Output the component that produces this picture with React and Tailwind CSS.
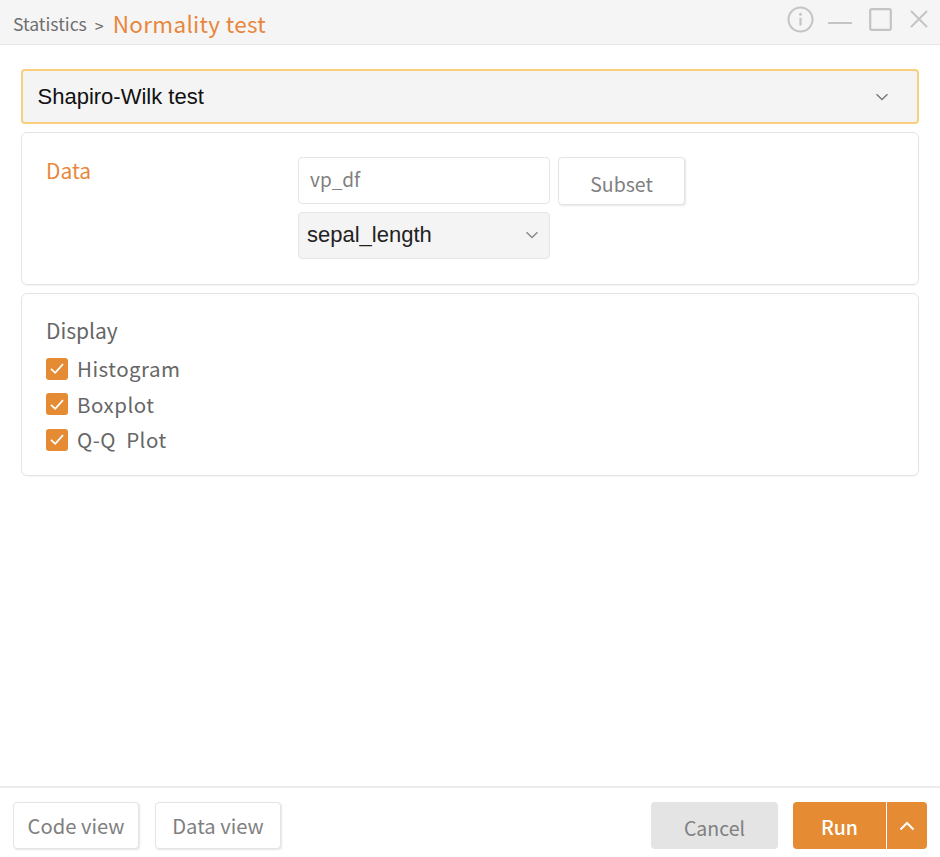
import React from "react";

function Chevron({ color = "#777" }) {
  return (
    <svg width="14" height="8" viewBox="0 0 14 8" fill="none">
      <path d="M1.5 1.2 L7 6.6 L12.5 1.2" stroke={color} strokeWidth="1.4" />
    </svg>
  );
}

function Check({ label }) {
  return (
    <div className="flex h-[35.5px] items-center">
      <span className="flex h-[22px] w-[22px] items-center justify-center rounded-[3px] bg-[#e48b33]">
        <svg width="16" height="13" viewBox="0 0 16 13" fill="none">
          <path d="M2 6.8 L6.2 10.8 L14 2.2" stroke="#fff" strokeWidth="1.8" />
        </svg>
      </span>
      <span className="ml-[9px] text-[20.5px] tracking-[0.5px] text-[#666] [word-spacing:5px]">{label}</span>
    </div>
  );
}

function GhostButton({ children, className = "" }) {
  return (
    <button className={"rounded-[4px] border border-[#e4e4e4] bg-white text-[#808080] shadow-[1px_1px_2px_rgba(0,0,0,0.1)] " + className}>
      {children}
    </button>
  );
}

export default function App() {
  return (
    <div className="flex h-[857px] w-[940px] flex-col overflow-hidden bg-white font-['Noto_Sans_CJK_KR','Noto_Sans',sans-serif]">
      <header className="flex h-[45px] shrink-0 items-center border-b border-[#e6e6e6] bg-[#f5f5f5] pl-[13px] pr-[12px]">
        <span className="mt-[5px] text-[17.6px] text-[#6e6e6e]">Statistics</span>
        <span className="ml-[8px] mt-[5px] text-[16px] text-[#6e6e6e]">&gt;</span>
        <span className="ml-[9px] mt-[3px] text-[22.5px] tracking-[0.3px] text-[#e8873c]">Normality test</span>
        <div className="ml-auto flex items-center">
          <svg width="27" height="27" viewBox="0 0 27 27" fill="none" className="mb-[5px]">
            <circle cx="13.5" cy="13.5" r="12" stroke="#c4c4c4" strokeWidth="2" />
            <circle cx="13.5" cy="8.2" r="1.5" fill="#c4c4c4" />
            <path d="M13.5 11.8 V19.5" stroke="#c4c4c4" strokeWidth="2.2" />
          </svg>
          <svg width="24" height="27" viewBox="0 0 24 27" fill="none" className="mb-[2px] ml-[14px]">
            <path d="M0 15 H24" stroke="#c4c4c4" strokeWidth="2" />
          </svg>
          <svg width="23" height="23" viewBox="0 0 23 23" fill="none" className="mb-[6px] ml-[17px]">
            <rect x="1.2" y="1.2" width="20.6" height="20.6" rx="1.5" stroke="#c4c4c4" strokeWidth="2.2" />
          </svg>
          <svg width="18" height="18" viewBox="0 0 18 18" fill="none" className="mb-[6px] ml-[18px]">
            <path d="M1 1 L17 17 M17 1 L1 17" stroke="#c4c4c4" strokeWidth="2" />
          </svg>
        </div>
      </header>

      <main className="flex flex-1 flex-col px-[21px] pt-[24px]">
        <div className="flex h-[55px] items-center justify-between rounded-[4px] border-2 border-[#f8cf7f] bg-[#f4f4f4] pl-[14.5px] pr-[28px] font-['Liberation_Sans',sans-serif] text-[22px] text-[#111]">
          <span>Shapiro-Wilk test</span>
          <Chevron />
        </div>

        <section className="mt-[8px] flex h-[153px] rounded-[6px] border border-[#e4e4e4] shadow-[0_1px_1px_rgba(0,0,0,0.04)]">
          <div className="w-[276px] shrink-0 pl-[24px] pt-[22px] text-[21px] leading-[30px] text-[#e8873c]">Data</div>
          <div className="pt-[24px]">
            <div className="flex gap-[8px]">
              <div className="flex h-[47px] w-[252px] items-center rounded-[4px] border border-[#e4e4e4] bg-white pb-[2px] pl-[11px] text-[19px] text-[#808080]">
                vp_df
              </div>
              <GhostButton className="h-[48px] w-[127px] pt-[6px] text-[19.5px]">Subset</GhostButton>
            </div>
            <div className="mt-[7px] flex h-[47px] w-[252px] items-center justify-between rounded-[4px] border border-[#e6e6e6] bg-[#f4f4f4] pb-[2px] pl-[8px] pr-[10px] font-['Liberation_Sans',sans-serif] text-[22px] text-[#222]">
              <span>sepal_length</span>
              <Chevron color="#888" />
            </div>
          </div>
        </section>

        <section className="mt-[8px] h-[183px] rounded-[6px] border border-[#e4e4e4] pl-[24px] pt-[21px] shadow-[0_1px_1px_rgba(0,0,0,0.04)]">
          <div className="mb-[6px] text-[21px] leading-[30px] text-[#666]">Display</div>
          <Check label="Histogram" />
          <Check label="Boxplot" />
          <Check label="Q-Q Plot" />
        </section>
      </main>

      <footer className="flex h-[71px] shrink-0 items-start border-t-2 border-[#ececec] pl-[13px] pr-[13px] pt-[14px]">
        <GhostButton className="h-[47px] w-[126px] pt-[2px] text-[20.2px]">Code view</GhostButton>
        <GhostButton className="ml-[16px] h-[47px] w-[126px] pt-[2px] text-[20.2px]">Data view</GhostButton>
        <button className="ml-auto h-[47px] w-[127px] rounded-[4px] bg-[#e4e4e4] pt-[5px] text-[19.5px] text-[#808080]">Cancel</button>
        <div className="ml-[15px] flex h-[47px] w-[134px] gap-px">
          <button className="w-[93px] rounded-l-[4px] bg-[#e48b33] pt-[3px] text-[19.5px] font-medium text-white">Run</button>
          <button className="flex w-[40px] items-center justify-center rounded-r-[4px] bg-[#e48b33]">
            <svg width="16" height="10" viewBox="0 0 16 10" fill="none">
              <path d="M1.5 8.5 L8 2 L14.5 8.5" stroke="#fff" strokeWidth="2" />
            </svg>
          </button>
        </div>
      </footer>
    </div>
  );
}
